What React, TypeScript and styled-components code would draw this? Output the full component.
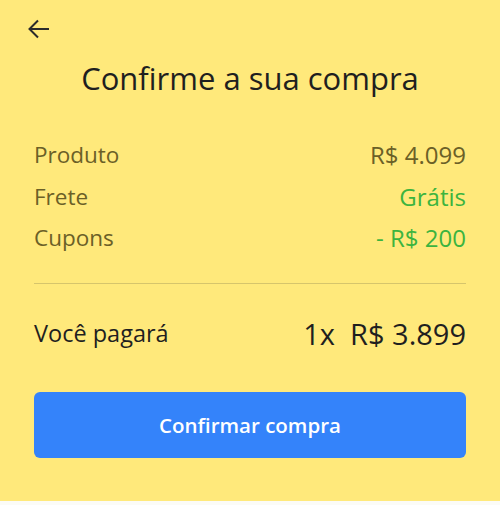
import React from 'react'
import styled, { createGlobalStyle } from 'styled-components';

const GlobalStyle = createGlobalStyle`
  body {
    margin: 0;
    background: #fbfbf7;
    font-family: "Open Sans", "Lato", sans-serif;
  }
`;

const rows = [
  { label: "Produto", value: "R$ 4.099", green: false },
  { label: "Frete", value: "Grátis", green: true },
  { label: "Cupons", value: "- R$ 200", green: true },
];

const App = () => {
  return (
    <>
      <GlobalStyle />
      <Sheet>
        <Back aria-label="Voltar">
          <svg width="24" height="24" viewBox="0 0 24 24" fill="none">
            <path d="M22 12H3M11 3.5L2.5 12L11 20.5" stroke="#2b2b2b" strokeWidth="2" />
          </svg>
        </Back>
        <Title>Confirme a sua compra</Title>

        <Summary>
          {rows.map((r) => (
            <Row key={r.label}>
              <Label>{r.label}</Label>
              <Value green={r.green}>{r.value}</Value>
            </Row>
          ))}
        </Summary>

        <Divider />

        <Total>
          <TotalLabel>Você pagará</TotalLabel>
          <TotalValue>1x&nbsp; R$ 3.899</TotalValue>
        </Total>

        <Button>Confirmar compra</Button>
      </Sheet>
    </>
  )
}

export default App;

const Sheet = styled.div`
  height: 501px;
  background-color: #ffe97b;
  padding: 0 34px;
  box-sizing: border-box;
  display: flex;
  flex-direction: column;
`;
const Back = styled.div`
  width: 24px;
  height: 24px;
  margin-top: 17px;
  margin-left: -7px;
  display: flex;
`;
const Title = styled.h1`
  margin: 19px 0 0;
  text-align: center;
  font-size: 31px;
  font-weight: 400;
  color: #1f1f1f;
  line-height: 36px;
`;
const Summary = styled.div`
  margin-top: 43px;
  display: flex;
  flex-direction: column;
  gap: 10.5px;
`;
const Row = styled.div`
  display: flex;
  justify-content: space-between;
  align-items: center;
  height: 31px;
  font-size: 22.5px;
`;
const Label = styled.span`
  color: #6b6027;
`;
const Value = styled.span<{ green: boolean }>`
  color: ${(p) => (p.green ? "#3cb43f" : "#6b6027")};
  font-size: 24px;
`;
const Divider = styled.div`
  margin-top: 30px;
  height: 1px;
  background-color: #d6c56c;
`;
const Total = styled.div`
  margin-top: 32px;
  display: flex;
  justify-content: space-between;
  align-items: center;
  height: 34px;
  color: #1f1f1f;
`;
const TotalLabel = styled.span`
  font-size: 23.5px;
`;
const TotalValue = styled.span`
  font-size: 29px;
`;
const Button = styled.button`
  margin-top: 42px;
  height: 66px;
  border: none;
  border-radius: 6px;
  background-color: #3483fa;
  color: white;
  font-family: inherit;
  font-size: 20.5px;
  font-weight: 600;
`;
